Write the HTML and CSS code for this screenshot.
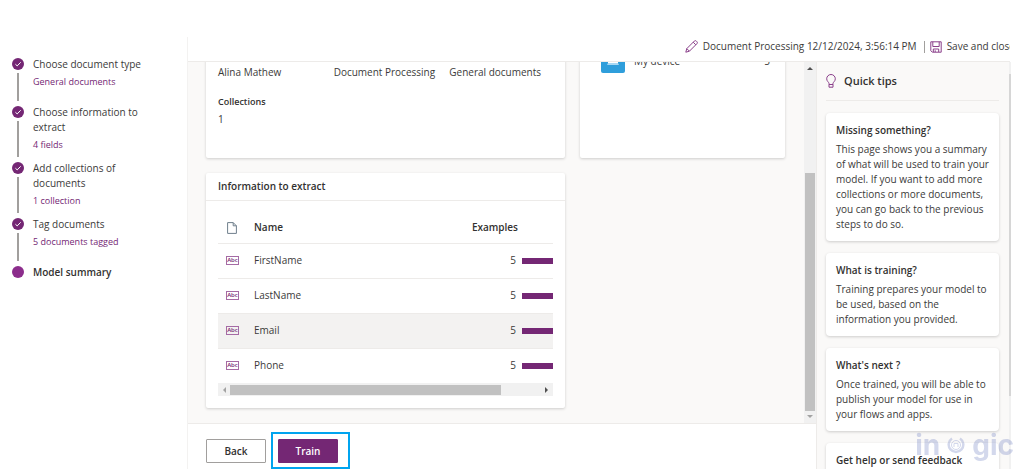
FILE: index.html
```
<!DOCTYPE html>
<html lang="en">
<head>
    <meta charset="UTF-8">
    <meta name="viewport" content="width=device-width, initial-scale=1.0">
    <title>Model summary</title>
    <link rel="stylesheet" href="styles.css">
</head>
<body>
    <div class="app">
        <nav class="steps">
            <ol>
                <li class="step">
                    <div class="marker">
                        <svg class="dot" viewBox="0 0 12 12"><circle cx="6" cy="6" r="6"/><path d="M3.4 6.2l1.8 1.7 3.5-3.6"/></svg>
                        <span class="line"></span>
                    </div>
                    <div class="step-text">
                        <p>Choose document type</p>
                        <a href="#">General documents</a>
                    </div>
                </li>
                <li class="step">
                    <div class="marker">
                        <svg class="dot" viewBox="0 0 12 12"><circle cx="6" cy="6" r="6"/><path d="M3.4 6.2l1.8 1.7 3.5-3.6"/></svg>
                        <span class="line"></span>
                    </div>
                    <div class="step-text">
                        <p>Choose information to extract</p>
                        <a href="#">4 fields</a>
                    </div>
                </li>
                <li class="step">
                    <div class="marker">
                        <svg class="dot" viewBox="0 0 12 12"><circle cx="6" cy="6" r="6"/><path d="M3.4 6.2l1.8 1.7 3.5-3.6"/></svg>
                        <span class="line"></span>
                    </div>
                    <div class="step-text">
                        <p>Add collections of documents</p>
                        <a href="#">1 collection</a>
                    </div>
                </li>
                <li class="step">
                    <div class="marker">
                        <svg class="dot" viewBox="0 0 12 12"><circle cx="6" cy="6" r="6"/><path d="M3.4 6.2l1.8 1.7 3.5-3.6"/></svg>
                        <span class="line"></span>
                    </div>
                    <div class="step-text">
                        <p>Tag documents</p>
                        <a href="#">5 documents tagged</a>
                    </div>
                </li>
                <li class="step current">
                    <div class="marker">
                        <svg class="dot" viewBox="0 0 12 12"><circle cx="6" cy="6" r="6"/></svg>
                    </div>
                    <div class="step-text">
                        <p>Model summary</p>
                    </div>
                </li>
            </ol>
        </nav>

        <div class="page">
            <header class="topbar">
                <button class="command">
                    <svg width="13" height="13" viewBox="0 0 13 13"><path d="M.8 12.2l1-3.6L9.3 1.1a1.4 1.4 0 0 1 2 0l.6.6a1.4 1.4 0 0 1 0 2L4.400 11.200zM8.200 2.200l2.600 2.600M1.800 8.600l2.600 2.600"/></svg>
                    Document Processing 12/12/2024, 3:56:14 PM
                </button>
                <span class="divider"></span>
                <button class="command">
                    <svg width="12" height="12" viewBox="0 0 12 12"><path d="M.8.8h10.400v10.400H2.300L.8 9.700zM2.800.8v4.700h6.400V.8M3.300 11V8h5.400v3M5.200 9.300v1.700"/></svg>
                    Save and close
                </button>
            </header>

            <div class="body">
                <main class="main">
                    <div class="scroller">
                        <div class="content">
                            <div class="cards">
                                <section class="card summary">
                                    <div class="facts">
                                        <span>Alina Mathew</span>
                                        <span>Document Processing</span>
                                        <span>General documents</span>
                                    </div>
                                    <h3>Collections</h3>
                                    <p>1</p>
                                </section>
                                <section class="card device">
                                    <svg width="24" height="24" viewBox="0 0 24 24"><rect width="24" height="24" rx="2" fill="#2f9edb"/><rect x="7" y="7" width="10" height="7" fill="#fff"/><path d="M7 14h10l1 2H6z" fill="#a9d8f3"/></svg>
                                    <span class="device-name">My device</span>
                                    <span>5</span>
                                </section>
                                <section class="card info">
                                    <h2>Information to extract</h2>
                                    <div class="table-wrap">
                                        <table>
                                            <thead>
                                                <tr>
                                                    <th class="col-icon"><svg class="doc" width="10" height="12" viewBox="0 0 10 12"><path d="M.6.6h5.600l3.200 3.200v7.600H.6zM6.200.6v3.200h3.200"/></svg></th>
                                                    <th>Name</th>
                                                    <th class="col-examples">Examples</th>
                                                </tr>
                                            </thead>
                                            <tbody>
                                                <tr>
                                                    <td><span class="abc">Abc</span></td>
                                                    <td>FirstName</td>
                                                    <td><div class="examples">5<span class="bar"></span></div></td>
                                                </tr>
                                                <tr>
                                                    <td><span class="abc">Abc</span></td>
                                                    <td>LastName</td>
                                                    <td><div class="examples">5<span class="bar"></span></div></td>
                                                </tr>
                                                <tr class="hovered">
                                                    <td><span class="abc">Abc</span></td>
                                                    <td>Email</td>
                                                    <td><div class="examples">5<span class="bar"></span></div></td>
                                                </tr>
                                                <tr>
                                                    <td><span class="abc">Abc</span></td>
                                                    <td>Phone</td>
                                                    <td><div class="examples">5<span class="bar"></span></div></td>
                                                </tr>
                                            </tbody>
                                        </table>
                                        <div class="hscroll">
                                            <svg width="12" height="12" viewBox="0 0 12 12"><path d="M8 3v6L5 6z" fill="#a3a3a3"/></svg>
                                            <span class="thumb"></span>
                                            <svg width="12" height="12" viewBox="0 0 12 12"><path d="M4 3v6l3-3z" fill="#505050"/></svg>
                                        </div>
                                    </div>
                                </section>
                            </div>
                        </div>
                        <div class="vscroll">
                            <svg width="12" height="12" viewBox="0 0 12 12"><path d="M3 8h6L6 5z" fill="#505050"/></svg>
                            <span class="thumb"></span>
                            <svg width="12" height="12" viewBox="0 0 12 12"><path d="M3 4h6L6 7z" fill="#a3a3a3"/></svg>
                        </div>
                    </div>
                    <footer class="actions">
                        <button class="btn">Back</button>
                        <div class="highlight">
                            <button class="btn primary">Train</button>
                        </div>
                    </footer>
                </main>

                <aside class="tips">
                    <h2>
                        <svg width="10" height="14" viewBox="0 0 10 14"><path d="M3 10.500V9.300C2.800 8.100.7 7.200.7 4.800a4.300 4.300 0 0 1 8.600 0C9.300 7.200 7.200 8.100 7 9.300v1.200zM3 10.500v2.700h4v-2.700"/></svg>
                        Quick tips
                    </h2>
                    <div class="tip">
                        <h3>Missing something?</h3>
                        <p>This page shows you a summary of what will be used to train your model. If you want to add more collections or more documents, you can go back to the previous steps to do so.</p>
                    </div>
                    <div class="tip">
                        <h3>What is training?</h3>
                        <p>Training prepares your model to be used, based on the information you provided.</p>
                    </div>
                    <div class="tip">
                        <h3>What's next ?</h3>
                        <p>Once trained, you will be able to publish your model for use in your flows and apps.</p>
                    </div>
                    <div class="tip">
                        <h3>Get help or send feedback</h3>
                    </div>
                </aside>
                <div class="edge"><span></span></div>
            </div>
        </div>
    </div>

    <div class="watermark">
        <span>in</span>
        <svg width="18" height="18" viewBox="0 0 18 18"><path d="M5 2.500a7.300 7.300 0 1 0 8 0" stroke-width="2.500"/><circle cx="9" cy="9" r="4.500" stroke-width="1"/><path d="M7 11V7.500h4V11" stroke-width="1"/></svg>
        <span>gic</span>
    </div>
</body>
</html>
```
FILE: styles.css
```
* {
    box-sizing: border-box;
}

body {
    margin: 0;
    font-family: "Open Sans", "Noto Sans", sans-serif;
    font-size: 10px;
    line-height: 15px;
    color: #3b3a39;
    background-color: #fff;
}

h2, h3, p, ol {
    margin: 0;
    padding: 0;
}

h2, h3 {
    font-size: 10px;
    font-weight: 600;
    color: #323130;
}

button {
    font-family: inherit;
    font-size: inherit;
    line-height: inherit;
    color: inherit;
    cursor: pointer;
}

svg {
    display: block;
    flex: none;
}

.app {
    display: flex;
    height: 100vh;
    padding: 37px 13px 4px 0;
    overflow: hidden;
}

/* left stepper */
.steps {
    flex: none;
    width: 188px;
    padding: 20px 40px 0 12px;
    border-right: 1px solid #f3f2f1;
}

.steps ol {
    list-style: none;
}

.step {
    display: flex;
    gap: 9px;
    min-height: 48px;
}

.marker {
    display: flex;
    flex-direction: column;
    align-items: center;
    gap: 3px;
    padding: 1px 0 4px;
}

.dot {
    width: 12px;
    height: 12px;
}

.dot circle {
    fill: #742774;
}

.dot path {
    fill: none;
    stroke: #fff;
}

.current .dot circle {
    fill: #8c2d8c;
}

.line {
    flex: 1;
    width: 2px;
    background-color: #a19f9d;
}

.step-text {
    padding-bottom: 9px;
}

.step-text a {
    display: block;
    margin-top: 2px;
    font-size: 9px;
    color: #742774;
    text-decoration: none;
}

.current p {
    font-weight: 600;
    color: #323130;
}

/* page */
.page {
    flex: 1;
    min-width: 0;
    display: flex;
    flex-direction: column;
}

.topbar {
    flex: none;
    display: flex;
    align-items: center;
    justify-content: flex-end;
    height: 25px;
    margin-right: 1px;
    padding-bottom: 5px;
    border-bottom: 1px solid #edebe9;
    overflow: hidden;
}

.command {
    flex: none;
    display: flex;
    align-items: center;
    gap: 5px;
    padding: 0;
    border: none;
    background: none;
    white-space: nowrap;
}

.command:last-child {
    margin-right: -5px;
}

.command svg path, .tips h2 path {
    fill: none;
    stroke: #8a3f8a;
}

.divider {
    width: 1px;
    height: 12px;
    margin: 0 5px 0 7px;
    background-color: #a19f9d;
}

.body {
    flex: 1;
    min-height: 0;
    display: flex;
    background-color: #faf9f8;
}

.main {
    flex: 1;
    min-width: 0;
    display: flex;
    flex-direction: column;
}

.scroller {
    flex: 1;
    min-height: 0;
    display: flex;
}

/* scrolled to the end */
.content {
    flex: 1;
    min-width: 0;
    display: flex;
    flex-direction: column;
    justify-content: flex-end;
    padding: 0 19px 15px 18px;
    overflow: hidden;
}

.cards {
    display: grid;
    grid-template-columns: 7fr 4fr;
    gap: 15px;
}

.card, .tip {
    background-color: #fff;
    border-radius: 2px;
    box-shadow: 0 1px 3px rgba(0, 0, 0, 0.18);
}

.summary {
    padding: 30px 12px 31px;
}

.facts {
    display: grid;
    grid-template-columns: repeat(3, 1fr);
    column-gap: 12px;
    margin-bottom: 14px;
    white-space: nowrap;
}

.summary h3 {
    margin-bottom: 3px;
    font-size: 9px;
}

.device {
    display: flex;
    align-items: flex-start;
    gap: 9px;
    padding: 14px 15px 0 21px;
    line-height: 24px;
}

.device-name {
    flex: 1;
}

.info h2 {
    padding: 6px 12px;
    border-bottom: 1px solid #edebe9;
}

.table-wrap {
    padding: 11px 12px 12px;
}

table {
    width: 100%;
    table-layout: fixed;
    border-collapse: collapse;
}

th, td {
    height: 35px;
    padding: 0;
    text-align: left;
    border-bottom: 1px solid #edebe9;
}

th {
    height: 31px;
    padding-top: 1px;
    font-weight: 600;
    color: #323130;
}

tbody tr:last-child td {
    border-bottom: none;
}

.col-icon {
    width: 36px;
}

.col-examples {
    width: 81px;
}

.hovered {
    background-color: #f3f2f1;
}

.doc {
    margin-left: 9px;
}

.doc path {
    fill: none;
    stroke: #6f7f8c;
}

.abc {
    display: block;
    width: 13px;
    margin-left: 8px;
    border: 1px solid #a56ba5;
    font-size: 6px;
    font-weight: 600;
    line-height: 7px;
    text-align: center;
    color: #742774;
}

.examples {
    display: flex;
    align-items: center;
    justify-content: flex-end;
    gap: 6px;
}

.bar {
    width: 31px;
    height: 6px;
    background-color: #742774;
}

.hscroll {
    display: flex;
    align-items: center;
    height: 13px;
    background-color: #f1f1f1;
}

.hscroll .thumb {
    width: 81%;
    height: 10px;
    margin-right: auto;
    background-color: #c1c1c1;
}

.vscroll {
    flex: none;
    display: flex;
    flex-direction: column;
    align-items: center;
    width: 12px;
    background-color: #f1f1f1;
}

.vscroll .thumb {
    width: 10px;
    height: 66%;
    margin-top: auto;
    background-color: #c1c1c1;
}

.actions {
    flex: none;
    display: flex;
    gap: 12px;
    height: 46px;
    padding: 15px 18px 0;
    border-top: 1px solid #edebe9;
    background-color: #fff;
}

.btn {
    width: 60px;
    height: 24px;
    padding: 0;
    border: 1px solid #a19f9d;
    border-radius: 1px;
    background-color: #fff;
    font-weight: 600;
    color: #323130;
}

.primary {
    border-color: #742774;
    background-color: #742774;
    color: #fff;
}

.highlight {
    position: relative;
    height: 24px;
}

.highlight::after {
    content: "";
    position: absolute;
    inset: -7px -12px -6px -7px;
    border: 2px solid #00a4ef;
    pointer-events: none;
}

/* quick tips */
.tips {
    flex: none;
    width: 193px;
    display: flex;
    flex-direction: column;
    gap: 12px;
    padding: 0 10px 0 9px;
    border-left: 1px solid #edebe9;
    overflow: hidden;
}

.tips h2 {
    display: flex;
    align-items: center;
    gap: 8px;
    height: 39px;
    flex: none;
    padding-bottom: 1px;
    border-bottom: 1px solid #edebe9;
    font-size: 11px;
}

.tip {
    flex: none;
    padding: 10px 8px 9px 10px;
    border-radius: 4px;
}

.tip h3 {
    margin-bottom: 4px;
}

.edge {
    flex: none;
    width: 2px;
    background-color: #f1f1f1;
}

.edge span {
    display: block;
    height: 79%;
    margin-top: 12px;
    background-color: #d6d6d6;
}

.watermark {
    position: fixed;
    right: 10px;
    bottom: 10px;
    display: flex;
    align-items: center;
    gap: 7px;
    font-family: Inter, sans-serif;
    font-size: 28px;
    font-weight: 700;
    line-height: 36px;
    color: #4f64b4;
    opacity: 0.25;
    pointer-events: none;
}

.watermark path, .watermark circle {
    fill: none;
    stroke: #4f64b4;
}
```
